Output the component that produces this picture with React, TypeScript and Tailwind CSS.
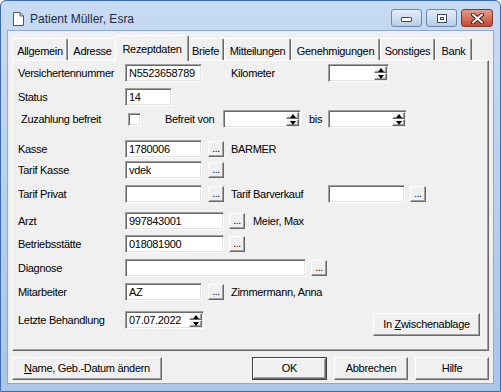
import React from "react";

const raised =
  "bg-[#f0f0f0] border border-t-white border-l-white border-b-[#696969] border-r-[#696969] shadow-[inset_-1px_-1px_0_#a0a0a0]";
const sunken =
  "bg-white border border-t-[#a0a0a0] border-l-[#a0a0a0] border-b-white border-r-white shadow-[inset_1px_1px_0_#696969,inset_-1px_-1px_0_#e3e3e3]";

function Field({ value, className }: { value?: string; className: string }) {
  return (
    <div className={`${sunken} h-[18px] pl-[3px] flex items-center leading-none ${className}`}>
      {value}
    </div>
  );
}

function Arrow({ up }: { up?: boolean }) {
  return (
    <div className={`${raised} flex-1 flex items-center justify-center`}>
      <div
        className={
          up
            ? "w-0 h-0 border-l-[3px] border-r-[3px] border-b-[4px] border-l-transparent border-r-transparent border-b-black"
            : "w-0 h-0 border-l-[3px] border-r-[3px] border-t-[4px] border-l-transparent border-r-transparent border-t-black"
        }
      />
    </div>
  );
}

function Spinner({ value, className }: { value?: string; className: string }) {
  return (
    <div className={`${sunken} h-[18px] flex items-stretch ${className}`}>
      <div className="flex-1 pl-[3px] flex items-center leading-none">{value}</div>
      <div className="w-[14px] flex flex-col py-[1px] pr-[1px]">
        <Arrow up />
        <Arrow />
      </div>
    </div>
  );
}

function Dots({ className = "" }: { className?: string }) {
  return (
    <div className={`${raised} w-[16px] h-[16px] flex items-end justify-center pb-[2px] leading-none text-[10px] ${className}`}>
      ...
    </div>
  );
}

function Label({ children }: { children: React.ReactNode }) {
  return <div className="w-[107px] shrink-0">{children}</div>;
}

const tabs = [
  { name: "Allgemein", w: "w-[56px]" },
  { name: "Adresse", w: "w-[49px]" },
  { name: "Rezeptdaten", w: "w-[74px]", active: true },
  { name: "Briefe", w: "w-[37px]" },
  { name: "Mitteilungen", w: "w-[67px]" },
  { name: "Genehmigungen", w: "w-[89px]" },
  { name: "Sonstiges", w: "w-[55px]" },
  { name: "Bank", w: "w-[37px]" },
];

export default function App() {
  return (
    <div className="w-[501px] h-[392px] flex flex-col border border-[#3f6cae] rounded-t-[6px] bg-gradient-to-b from-[#c7dbf2] to-[#a9c5e8] font-['Liberation_Sans',Arial,sans-serif] text-[11px] tracking-[-0.3px] text-black">
      {/* title bar */}
      <div className="h-[29px] flex items-start shrink-0">
        <div className="flex items-center h-[24px] mt-[6px] pl-[11px] flex-1">
          <svg width="12" height="14" viewBox="0 0 12 14">
            <path d="M1.5 0.5 H8 L11.5 4 V13.5 H1.5 Z" fill="#fff" stroke="#555" />
            <path d="M8 0.5 V4 H11.5" fill="none" stroke="#555" />
          </svg>
          <span className="ml-[6px] text-[12px] tracking-normal text-[#1e2a4a]">Patient Müller, Esra</span>
        </div>
        <div className="flex gap-[4px] mt-[8px] mr-[7px]">
          <div className="w-[31px] h-[18px] rounded-[3px] border border-[#6a86ab] bg-gradient-to-b from-[#e3edf8] to-[#b8cde6] flex items-center justify-center">
            <div className="w-[11px] h-[5px] mt-[3px] bg-white border border-[#3a4a63] rounded-[1px]" />
          </div>
          <div className="w-[31px] h-[18px] rounded-[3px] border border-[#6a86ab] bg-gradient-to-b from-[#e3edf8] to-[#b8cde6] flex items-center justify-center">
            <div className="w-[10px] h-[9px] bg-white border border-[#3a4a63] flex items-center justify-center">
              <div className="w-[4px] h-[3px] border border-[#3a4a63]" />
            </div>
          </div>
          <div className="w-[32px] h-[18px] rounded-[3px] border border-[#7a3a32] bg-gradient-to-b from-[#e59a8a] to-[#c3462f] flex items-center justify-center">
            <svg width="13" height="11" viewBox="0 0 13 11">
              <path d="M2 1.5 L11 9.5 M11 1.5 L2 9.5" stroke="#4a1a14" strokeWidth="4" strokeLinecap="round" />
              <path d="M2 1.5 L11 9.5 M11 1.5 L2 9.5" stroke="#fff" strokeWidth="2" strokeLinecap="round" />
            </svg>
          </div>
        </div>
      </div>

      {/* client area */}
      <div className="flex-1 mx-[6px] mb-[7px] border border-[#8ea9cc] bg-[#f0f0f0] flex flex-col px-[4px] pb-[3px]">
        {/* tabs */}
        <div className="flex items-end h-[29px] shrink-0">
          {tabs.map((t) =>
            t.active ? (
              <div
                key={t.name}
                className={`${t.w} h-[26px] -mb-px relative z-10 bg-[#f0f0f0] border-t border-l border-t-white border-l-white border-r border-r-[#696969] shadow-[inset_-1px_0_0_#a0a0a0] rounded-t-[2px] flex items-start justify-center pt-[5px] -mx-[2px]`}
              >
                {t.name}
              </div>
            ) : (
              <div
                key={t.name}
                className={`${t.w} h-[22px] bg-[#f0f0f0] border-t border-l border-t-white border-l-white border-r border-r-[#696969] shadow-[inset_-1px_0_0_#a0a0a0] rounded-t-[2px] flex items-start justify-center pt-[4px]`}
              >
                {t.name}
              </div>
            )
          )}
        </div>

        {/* panel */}
        <div className="h-[291px] shrink-0 border border-t-white border-l-white border-b-[#696969] border-r-[#696969] shadow-[inset_-1px_-1px_0_#a0a0a0] flex flex-col pl-[5px]">
          <div className="flex items-center h-[18px] mt-[3px]">
            <Label>Versichertennummer</Label>
            <Field value="N5523658789" className="w-[77px]" />
            <div className="ml-[29px] w-[97px]">Kilometer</div>
            <Spinner className="w-[61px]" />
          </div>
          <div className="flex items-center h-[18px] mt-[6px]">
            <Label>Status</Label>
            <Field value="14" className="w-[47px]" />
          </div>
          <div className="flex items-center h-[18px] mt-[4px]">
            <div className="w-[107px] pl-[3px]">Zuzahlung befreit</div>
            <div className={`${sunken} w-[13px] h-[13px] ml-[3px]`} />
            <div className="ml-[24px] w-[58px]">Befreit von</div>
            <Spinner className="w-[78px]" />
            <div className="ml-[8px] w-[19px]">bis</div>
            <Spinner className="w-[79px]" />
          </div>
          <div className="flex items-center h-[18px] mt-[12px]">
            <Label>Kasse</Label>
            <Field value="1780006" className="w-[77px]" />
            <Dots className="ml-[6px]" />
            <div className="ml-[7px]">BARMER</div>
          </div>
          <div className="flex items-center h-[18px] mt-[3px]">
            <Label>Tarif Kasse</Label>
            <Field value="vdek" className="w-[77px]" />
            <Dots className="ml-[6px]" />
          </div>
          <div className="flex items-center h-[18px] mt-[6px]">
            <Label>Tarif Privat</Label>
            <Field className="w-[77px]" />
            <Dots className="ml-[6px]" />
            <div className="ml-[7px] w-[97px]">Tarif Barverkauf</div>
            <Field className="w-[77px]" />
            <Dots className="ml-[5px]" />
          </div>
          <div className="flex items-center h-[18px] mt-[9px]">
            <Label>Arzt</Label>
            <Field value="997843001" className="w-[99px]" />
            <Dots className="ml-[5px]" />
            <div className="ml-[8px]">Meier, Max</div>
          </div>
          <div className="flex items-center h-[18px] mt-[5px]">
            <Label>Betriebsstätte</Label>
            <Field value="018081900" className="w-[99px]" />
            <Dots className="ml-[5px]" />
          </div>
          <div className="flex items-center h-[18px] mt-[6px]">
            <Label>Diagnose</Label>
            <Field className="w-[181px]" />
            <Dots className="ml-[5px]" />
          </div>
          <div className="flex items-center h-[18px] mt-[6px]">
            <Label>Mitarbeiter</Label>
            <Field value="AZ" className="w-[77px]" />
            <Dots className="ml-[6px]" />
            <div className="ml-[7px]">Zimmermann, Anna</div>
          </div>
          <div className="flex items-start mt-[10px]">
            <div className="flex items-center h-[18px]">
              <Label>Letzte Behandlung</Label>
              <Spinner value="07.07.2022" className="w-[79px]" />
            </div>
            <div className={`${raised} ml-auto mr-[8px] mt-[2px] w-[107px] h-[23px] flex items-center justify-center`}>
              In&nbsp;<span className="underline">Z</span>wischenablage
            </div>
          </div>
        </div>

        {/* bottom buttons */}
        <div className="flex mt-[6px] h-[23px] shrink-0">
          <div className={`${raised} w-[150px] flex items-center justify-center`}>
            <span className="underline">N</span>ame, Geb.-Datum ändern
          </div>
          <div className="ml-auto w-[75px] border border-[#404040] flex">
            <div className={`${raised} flex-1 flex items-center justify-center`}>OK</div>
          </div>
          <div className={`${raised} ml-[7px] w-[74px] flex items-center justify-center`}>Abbrechen</div>
          <div className={`${raised} ml-[7px] w-[74px] flex items-center justify-center`}>Hilfe</div>
        </div>
      </div>
    </div>
  );
}
